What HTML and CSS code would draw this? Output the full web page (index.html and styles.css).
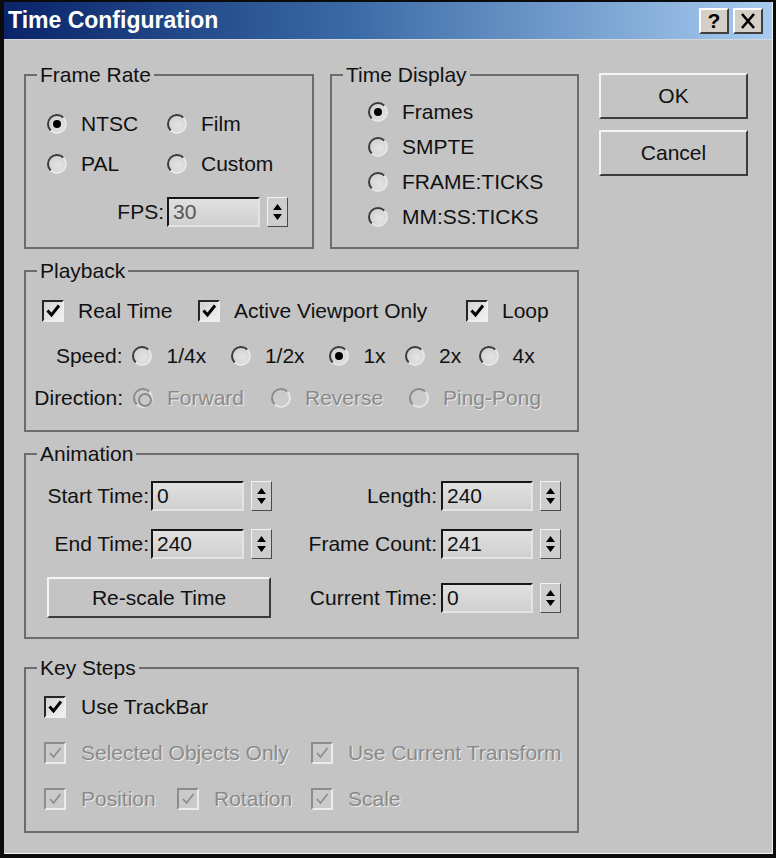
FILE: index.html
```html
<!DOCTYPE html>
<html>
<head>
<meta charset="utf-8">
<title>Time Configuration</title>
<link rel="stylesheet" href="styles.css">
</head>
<body>
<div class="window">
  <div class="titlebar">
    <span class="title">Time Configuration</span>
    <div class="tbtns">
      <span class="tbtn">?</span>
      <span class="tbtn"><svg width="16" height="16" viewBox="0 0 16 16"><path d="M2 1 L14 15 M14 1 L2 15" stroke="#000" stroke-width="2.6" fill="none"/></svg></span>
    </div>
  </div>
  <div class="content">
    <div class="groups">
      <div class="row1">
        <fieldset class="group frame-rate">
          <legend>Frame Rate</legend>
          <div class="fr-body">
            <label class="radio"><span class="rb on"></span>NTSC</label>
            <label class="radio"><span class="rb"></span>Film</label>
            <label class="radio"><span class="rb"></span>PAL</label>
            <label class="radio"><span class="rb"></span>Custom</label>
            <span class="fps-label">FPS:</span>
            <div class="field">
              <span class="inp fps">30</span>
              <span class="spin"><svg width="19" height="28" viewBox="0 0 19 28"><path d="M9.5 6 L14 12 H5Z M9.5 22 L14 16 H5Z" fill="#000"/></svg></span>
            </div>
          </div>
        </fieldset>
        <fieldset class="group time-display">
          <legend>Time Display</legend>
          <div class="td-body">
            <label class="radio"><span class="rb on"></span>Frames</label>
            <label class="radio"><span class="rb"></span>SMPTE</label>
            <label class="radio"><span class="rb"></span>FRAME:TICKS</label>
            <label class="radio"><span class="rb"></span>MM:SS:TICKS</label>
          </div>
        </fieldset>
      </div>

      <fieldset class="group playback">
        <legend>Playback</legend>
        <div class="pb-body">
          <div class="checks">
            <label class="check"><span class="cb"><svg width="16" height="16" viewBox="0 0 16 16"><path d="M2.5 7.5 L6.5 12 L14 2.5" fill="none" stroke="#000" stroke-width="3"/></svg></span>Real Time</label>
            <label class="check"><span class="cb"><svg width="16" height="16" viewBox="0 0 16 16"><path d="M2.5 7.5 L6.5 12 L14 2.5" fill="none" stroke="#000" stroke-width="3"/></svg></span>Active Viewport Only</label>
            <label class="check"><span class="cb"><svg width="16" height="16" viewBox="0 0 16 16"><path d="M2.5 7.5 L6.5 12 L14 2.5" fill="none" stroke="#000" stroke-width="3"/></svg></span>Loop</label>
          </div>
          <div class="srow speed">
            <span class="slabel">Speed:</span>
            <label class="radio s1"><span class="rb"></span>1/4x</label>
            <label class="radio s2"><span class="rb"></span>1/2x</label>
            <label class="radio s3"><span class="rb on"></span>1x</label>
            <label class="radio s4"><span class="rb"></span>2x</label>
            <label class="radio"><span class="rb"></span>4x</label>
          </div>
          <div class="srow direction">
            <span class="slabel">Direction:</span>
            <label class="radio d1 dis"><span class="rb on"></span>Forward</label>
            <label class="radio d2 dis"><span class="rb"></span>Reverse</label>
            <label class="radio dis"><span class="rb"></span>Ping-Pong</label>
          </div>
        </div>
      </fieldset>

      <fieldset class="group animation">
        <legend>Animation</legend>
        <div class="an-body">
          <span class="alabel">Start Time:</span>
          <div class="field"><span class="inp">0</span><span class="spin"><svg width="19" height="28" viewBox="0 0 19 28"><path d="M9.5 6 L14 12 H5Z M9.5 22 L14 16 H5Z" fill="#000"/></svg></span></div>
          <span class="alabel right">Length:</span>
          <div class="field"><span class="inp">240</span><span class="spin"><svg width="19" height="28" viewBox="0 0 19 28"><path d="M9.5 6 L14 12 H5Z M9.5 22 L14 16 H5Z" fill="#000"/></svg></span></div>

          <span class="alabel">End Time:</span>
          <div class="field"><span class="inp">240</span><span class="spin"><svg width="19" height="28" viewBox="0 0 19 28"><path d="M9.5 6 L14 12 H5Z M9.5 22 L14 16 H5Z" fill="#000"/></svg></span></div>
          <span class="alabel right">Frame Count:</span>
          <div class="field"><span class="inp">241</span><span class="spin"><svg width="19" height="28" viewBox="0 0 19 28"><path d="M9.5 6 L14 12 H5Z M9.5 22 L14 16 H5Z" fill="#000"/></svg></span></div>

          <button class="btn rescale">Re-scale Time</button>
          <span class="alabel right">Current Time:</span>
          <div class="field"><span class="inp">0</span><span class="spin"><svg width="19" height="28" viewBox="0 0 19 28"><path d="M9.5 6 L14 12 H5Z M9.5 22 L14 16 H5Z" fill="#000"/></svg></span></div>
        </div>
      </fieldset>

      <fieldset class="group keysteps">
        <legend>Key Steps</legend>
        <div class="ks-body">
          <label class="check wide3"><span class="cb"><svg width="16" height="16" viewBox="0 0 16 16"><path d="M2.5 7.5 L6.5 12 L14 2.5" fill="none" stroke="#000" stroke-width="3"/></svg></span>Use TrackBar</label>
          <label class="check wide2 dis"><span class="cb"><svg width="16" height="16" viewBox="0 0 16 16"><path d="M3 8 L6.5 12 L13.5 3" fill="none" stroke="#8a8a8a" stroke-width="1.6"/></svg></span>Selected Objects Only</label>
          <label class="check dis"><span class="cb"><svg width="16" height="16" viewBox="0 0 16 16"><path d="M3 8 L6.5 12 L13.5 3" fill="none" stroke="#8a8a8a" stroke-width="1.6"/></svg></span>Use Current Transform</label>
          <label class="check dis"><span class="cb"><svg width="16" height="16" viewBox="0 0 16 16"><path d="M3 8 L6.5 12 L13.5 3" fill="none" stroke="#8a8a8a" stroke-width="1.6"/></svg></span>Position</label>
          <label class="check dis"><span class="cb"><svg width="16" height="16" viewBox="0 0 16 16"><path d="M3 8 L6.5 12 L13.5 3" fill="none" stroke="#8a8a8a" stroke-width="1.6"/></svg></span>Rotation</label>
          <label class="check dis"><span class="cb"><svg width="16" height="16" viewBox="0 0 16 16"><path d="M3 8 L6.5 12 L13.5 3" fill="none" stroke="#8a8a8a" stroke-width="1.6"/></svg></span>Scale</label>
        </div>
      </fieldset>
    </div>

    <div class="buttons">
      <button class="btn">OK</button>
      <button class="btn">Cancel</button>
    </div>
  </div>
</div>
</body>
</html>
```
FILE: styles.css
```css
* { box-sizing: border-box; }
html, body { margin: 0; padding: 0; }
body {
  background: #0b0b0b;
  width: 776px;
  height: 858px;
  overflow: hidden;
  font-family: "Liberation Sans", Arial, sans-serif;
  font-size: 21px;
  color: #111;
}
.window {
  margin: 2px 3px 0 4px;
  height: 852px;
  background: #c4c4c4;
  border-right: 1px solid #f2f2f2;
  border-bottom: 1px solid #f2f2f2;
  display: flex;
  flex-direction: column;
}
.titlebar {
  height: 38px;
  flex: none;
  background: linear-gradient(to right, #0a246a 0%, #3a6aa6 45%, #a8ccf0 100%);
  display: flex;
  align-items: center;
  padding: 0 9px 0 4px;
  border-bottom: 1px solid #d6d6d6;
}
.title {
  flex: 1;
  color: #fff;
  font-weight: bold;
  font-size: 23px;
}
.tbtns { display: flex; gap: 4px; }
.tbtn {
  width: 30px;
  height: 26px;
  background: #d4d0c8;
  border: 2px solid;
  border-color: #fff #404040 #404040 #fff;
  display: flex;
  align-items: center;
  justify-content: center;
  font-weight: bold;
  font-size: 21px;
  color: #000;
}
.content {
  display: flex;
  gap: 20px;
  padding: 23px 0 0 20px;
}
.groups {
  width: 555px;
  display: flex;
  flex-direction: column;
}
.row1 { display: flex; gap: 16px; }

.group {
  margin: 0;
  padding: 0;
  min-width: 0;
  border: 2px solid #6c6c6c;
}
.group legend {
  margin-left: 11px;
  padding: 0 3px;
  line-height: 24px;
}
.frame-rate { width: 290px; flex: none; }
.time-display { flex: 1; }
.playback { margin-top: 10px; }
.animation { margin-top: 10px; }
.keysteps { margin-top: 17px; }

/* radios */
.radio {
  display: flex;
  align-items: center;
  gap: 14px;
  height: 28px;
  white-space: nowrap;
}
.rb {
  position: relative;
  flex: none;
  width: 20px;
  height: 20px;
  border-radius: 50%;
  border: 2px solid;
  border-color: #3a3a3a #e6e6e6 #e6e6e6 #3a3a3a;
  background: radial-gradient(circle at 60% 60%, #e4e4e4, #cdcdcd);
}
.rb.on::after {
  content: "";
  position: absolute;
  left: 50%;
  top: 50%;
  width: 8px;
  height: 8px;
  margin: -4px 0 0 -4px;
  border-radius: 50%;
  background: #000;
}

/* checkboxes */
.check {
  display: flex;
  align-items: center;
  gap: 14px;
  height: 28px;
  white-space: nowrap;
}
.cb {
  flex: none;
  width: 22px;
  height: 22px;
  border: 2px solid;
  border-color: #262626 #eeeeee #eeeeee #262626;
  background: linear-gradient(135deg, #d2d2d2, #f2f2f2);
  display: flex;
  align-items: center;
  justify-content: center;
}
.dis { color: #8a8a8a; text-shadow: 1px 1px 0 #ededed; }
.dis .cb {
  border-color: #8c8c8c #ececec #ececec #8c8c8c;
  background: #cacaca;
}
.dis .rb {
  border-color: #8a8a8a #e6e6e6 #e6e6e6 #8a8a8a;
  background: #cbcbcb;
}
.dis .rb.on::after {
  background: #c8c8c8;
  border: 2px solid #8a8a8a;
  width: 10px; height: 10px; margin: -5px 0 0 -5px;
}

/* fields */
.field { display: flex; align-items: center; gap: 7px; }
.inp {
  width: 94px;
  height: 30px;
  border: 2px solid;
  border-color: #161616 #e4e4e4 #e4e4e4 #161616;
  background: linear-gradient(#e0e0e0, #d0d0d0);
  padding: 0 4px;
  display: flex;
  align-items: center;
  color: #111;
}
.inp.fps { width: 93px; color: #555; }
.spin {
  width: 21px;
  height: 30px;
  border: 1px solid;
  border-color: #f2f2f2 #4a4a4a #4a4a4a #f2f2f2;
  background: #cdcdcd;
  display: flex;
}

/* buttons */
.btn {
  font-family: inherit;
  font-size: 21px;
  color: #111;
  background: #c4c4c4;
  border: 2px solid;
  border-color: #f4f4f4 #3c3c3c #3c3c3c #f4f4f4;
  padding: 0;
  display: flex;
  align-items: center;
  justify-content: center;
}
.buttons {
  width: 149px;
  padding-top: 10px;
  display: flex;
  flex-direction: column;
  gap: 11px;
}
.buttons .btn { height: 46px; }

/* frame rate */
.fr-body {
  display: grid;
  grid-template-columns: 120px auto;
  grid-auto-rows: 28px;
  row-gap: 12px;
  padding: 23px 0 0 21px;
}
.fps-label {
  justify-self: end;
  align-self: center;
  padding-right: 3px;
  margin-top: 16px;
}
.fr-body .field { margin-top: 16px; }

/* time display */
.td-body {
  display: flex;
  flex-direction: column;
  gap: 7px;
  padding: 11px 0 16px 36px;
}

/* playback */
.pb-body { padding: 14px 0 18px 0; }
.checks {
  display: grid;
  grid-template-columns: 156px 268px auto;
  padding-left: 16px;
}
.srow { display: flex; align-items: center; height: 28px; }
.speed { margin-top: 17px; }
.direction { margin-top: 14px; }
.slabel { width: 99px; text-align: right; padding-right: 2px; margin-right: 8px; }
.speed .radio { width: 99px; }
.speed .s3 { width: 76px; }
.speed .s4 { width: 74px; }
.direction .radio { width: 138px; }

/* animation */
.an-body {
  display: grid;
  grid-template-columns: 104px 121px 169px 120px;
  grid-template-rows: 30px 30px 41px;
  row-gap: 18px;
  padding: 15px 0 19px 21px;
}
.alabel {
  justify-self: end;
  align-self: center;
  padding-right: 2px;
  white-space: nowrap;
}
.alabel.right { padding-right: 4px; }
.rescale { grid-column: 1 / 3; width: 224px; height: 41px; }
.an-body .field { align-self: center; }

/* key steps */
.ks-body {
  display: grid;
  grid-template-columns: 133px 134px auto;
  grid-auto-rows: 28px;
  row-gap: 18px;
  padding: 13px 0 18px 18px;
}
.ks-body .check { gap: 15px; }
.wide3 { grid-column: 1 / 4; }
.wide2 { grid-column: 1 / 3; }
```
